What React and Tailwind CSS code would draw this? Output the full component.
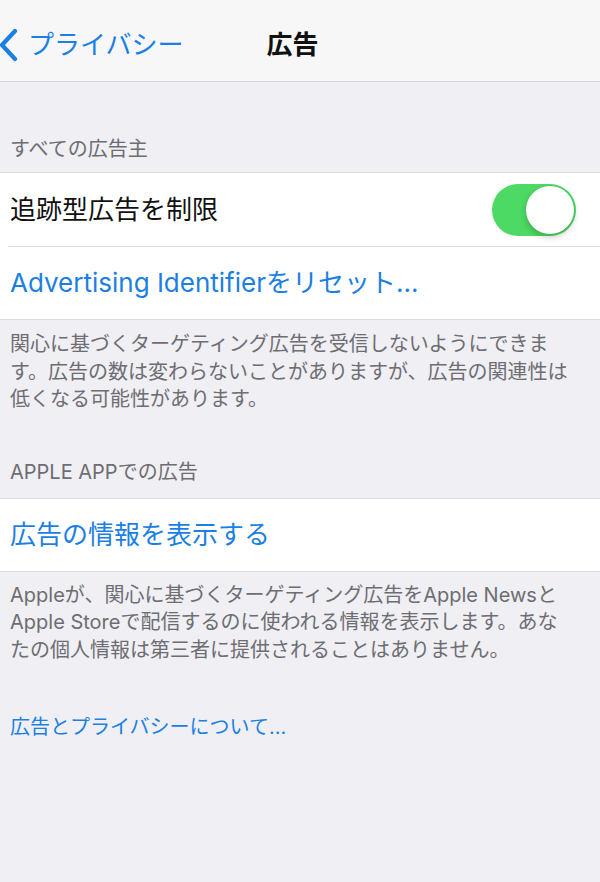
export default function App() {
  const font = { fontFamily: '"Inter", "Noto Sans CJK JP", sans-serif' };
  return (
    <div className="w-[600px] h-[882px] bg-[#efeff4] overflow-hidden" style={font}>
      {/* Nav bar */}
      <div className="h-[82px] bg-[#f7f7f8] border-b border-[#d8d8dc] flex items-center">
        <svg width="20" height="34" viewBox="0 0 20 34" className="ml-[-1px] mt-[9px]">
          <path d="M16 3 L3 17 L16 31" fill="none" stroke="#1b7fe3" strokeWidth="4.2" strokeLinecap="round" strokeLinejoin="round" />
        </svg>
        <span className="ml-[9px] mt-[8px] text-[26px] leading-[32px] text-[#1b7fe3]">プライバシー</span>
        <span className="ml-[83px] mt-[8px] text-[26px] leading-[32px] font-bold text-[#111]">広告</span>
      </div>

      {/* Section header 1 */}
      <div className="h-[90px] flex items-end pb-[9px] px-[10px]">
        <span className="text-[20px] leading-[27px] text-[#6d6d72]">すべての広告主</span>
      </div>

      {/* Group 1 */}
      <div className="bg-white border-y border-[#dcdce0]">
        <div className="h-[73px] flex items-center justify-between pl-[10px] pr-[24px]">
          <span className="text-[26px] leading-[32px] text-[#111]">追跡型広告を制限</span>
          <div className="relative w-[84px] h-[52px] rounded-full bg-[#4cd964]">
            <div className="absolute right-[2px] top-[2px] w-[48px] h-[48px] rounded-full bg-white shadow-[0_3px_6px_rgba(0,0,0,0.22)]" />
          </div>
        </div>
        <div className="ml-[8px] h-px bg-[#dcdce0]" />
        <div className="h-[72px] flex items-center pl-[10px]">
          <span className="text-[26px] leading-[32px] text-[#1b7fe3]">Advertising Identifierをリセット...</span>
        </div>
      </div>

      {/* Footer 1 */}
      <div className="pt-[11px] pb-[45px] px-[10px] text-[20px] leading-[27.5px] text-[#6d6d72]">
        関心に基づくターゲティング広告を受信しないようにできま<br />
        す。広告の数は変わらないことがありますが、広告の関連性は<br />
        低くなる可能性があります。
      </div>

      {/* Section header 2 */}
      <div className="pb-[12px] px-[10px]">
        <span className="text-[20px] leading-[27px] text-[#6d6d72]">APPLE APPでの広告</span>
      </div>

      {/* Group 2 */}
      <div className="bg-white border-y border-[#dcdce0]">
        <div className="h-[72px] flex items-center pl-[10px]">
          <span className="text-[26px] leading-[32px] text-[#1b7fe3]">広告の情報を表示する</span>
        </div>
      </div>

      {/* Footer 2 */}
      <div className="pt-[10px] pb-[50px] px-[10px] text-[20px] leading-[27.5px] text-[#6d6d72] whitespace-nowrap">
        Appleが、関心に基づくターゲティング広告をApple Newsと<br />
        Apple Storeで配信するのに使われる情報を表示します。あな<br />
        たの個人情報は第三者に提供されることはありません。
      </div>

      {/* Link */}
      <div className="px-[10px]">
        <span className="text-[20px] leading-[27px] text-[#1b7fe3]">広告とプライバシーについて...</span>
      </div>
    </div>
  );
}
